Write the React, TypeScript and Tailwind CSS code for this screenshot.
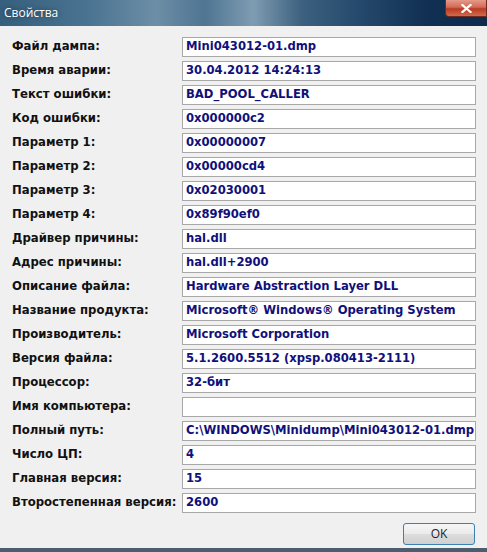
import React from "react";

const rows: [string, string][] = [
  ["Файл дампа:", "Mini043012-01.dmp"],
  ["Время аварии:", "30.04.2012 14:24:13"],
  ["Текст ошибки:", "BAD_POOL_CALLER"],
  ["Код ошибки:", "0x000000c2"],
  ["Параметр 1:", "0x00000007"],
  ["Параметр 2:", "0x00000cd4"],
  ["Параметр 3:", "0x02030001"],
  ["Параметр 4:", "0x89f90ef0"],
  ["Драйвер причины:", "hal.dll"],
  ["Адрес причины:", "hal.dll+2900"],
  ["Описание файла:", "Hardware Abstraction Layer DLL"],
  ["Название продукта:", "Microsoft® Windows® Operating System"],
  ["Производитель:", "Microsoft Corporation"],
  ["Версия файла:", "5.1.2600.5512 (xpsp.080413-2111)"],
  ["Процессор:", "32-бит"],
  ["Имя компьютера:", ""],
  ["Полный путь:", "C:\\WINDOWS\\Minidump\\Mini043012-01.dmp"],
  ["Число ЦП:", "4"],
  ["Главная версия:", "15"],
  ["Второстепенная версия:", "2600"],
];

export default function App() {
  return (
    <div className="flex h-[552px] w-[487px] flex-col overflow-hidden bg-[#f0f0f0] font-['DejaVu_Sans',sans-serif]">
      {/* Title bar */}
      <div className="relative flex h-[26px] items-center bg-[linear-gradient(90deg,#355f7d_0%,#4a7392_18%,#6d8ea6_32%,#4f7592_42%,#7f9cb2_52%,#3c607e_62%,#23476a_75%,#102f52_88%,#0e2b4c_100%)] pl-[4px]">
        <span className="font-['Open_Sans',sans-serif] text-[12px] text-white [text-shadow:0_0_4px_rgba(0,0,0,0.5)]">
          Свойства
        </span>
        <div className="absolute right-0 top-0 flex h-[17px] w-[42px] items-center justify-center rounded-bl-[4px] border border-t-0 border-[#6b2a22] bg-[linear-gradient(180deg,#e49a8a_0%,#d46a55_45%,#b93a22_55%,#d26a4c_100%)]">
          <svg width="11" height="9" viewBox="0 0 11 9">
            <path d="M1.5 1 L9.5 8 M9.5 1 L1.5 8" stroke="#ffffff" strokeWidth="2.2" strokeLinecap="square" />
          </svg>
        </div>
      </div>

      {/* Body */}
      <div className="flex flex-1 flex-col pl-[12px] pr-[11px] pt-[11px]">
        <div className="flex flex-col gap-[4px]">
          {rows.map(([label, value]) => (
            <div key={label} className="flex h-[20px] items-center">
              <div className="w-[170px] text-[11.7px] font-bold text-[#111111]">{label}</div>
              <div className="flex h-[20px] flex-1 items-center overflow-hidden whitespace-nowrap border border-[#a8a8a8] bg-white pl-[3px] text-[11.6px] font-bold text-[#10107a]">
                {value}
              </div>
            </div>
          ))}
        </div>
        <div className="mt-[10px] flex justify-end pr-[1px]">
          <button className="h-[22px] w-[72px] rounded-[3px] border border-[#3c7fb1] bg-[linear-gradient(180deg,#f6f6f6_0%,#ebebeb_48%,#dddddd_52%,#cfcfcf_100%)] font-['Open_Sans',sans-serif] text-[12px] text-[#222222]">
            OK
          </button>
        </div>
      </div>

      {/* Bottom frame */}
      <div className="h-[4px] bg-[#4b5d6e]" />
    </div>
  );
}
